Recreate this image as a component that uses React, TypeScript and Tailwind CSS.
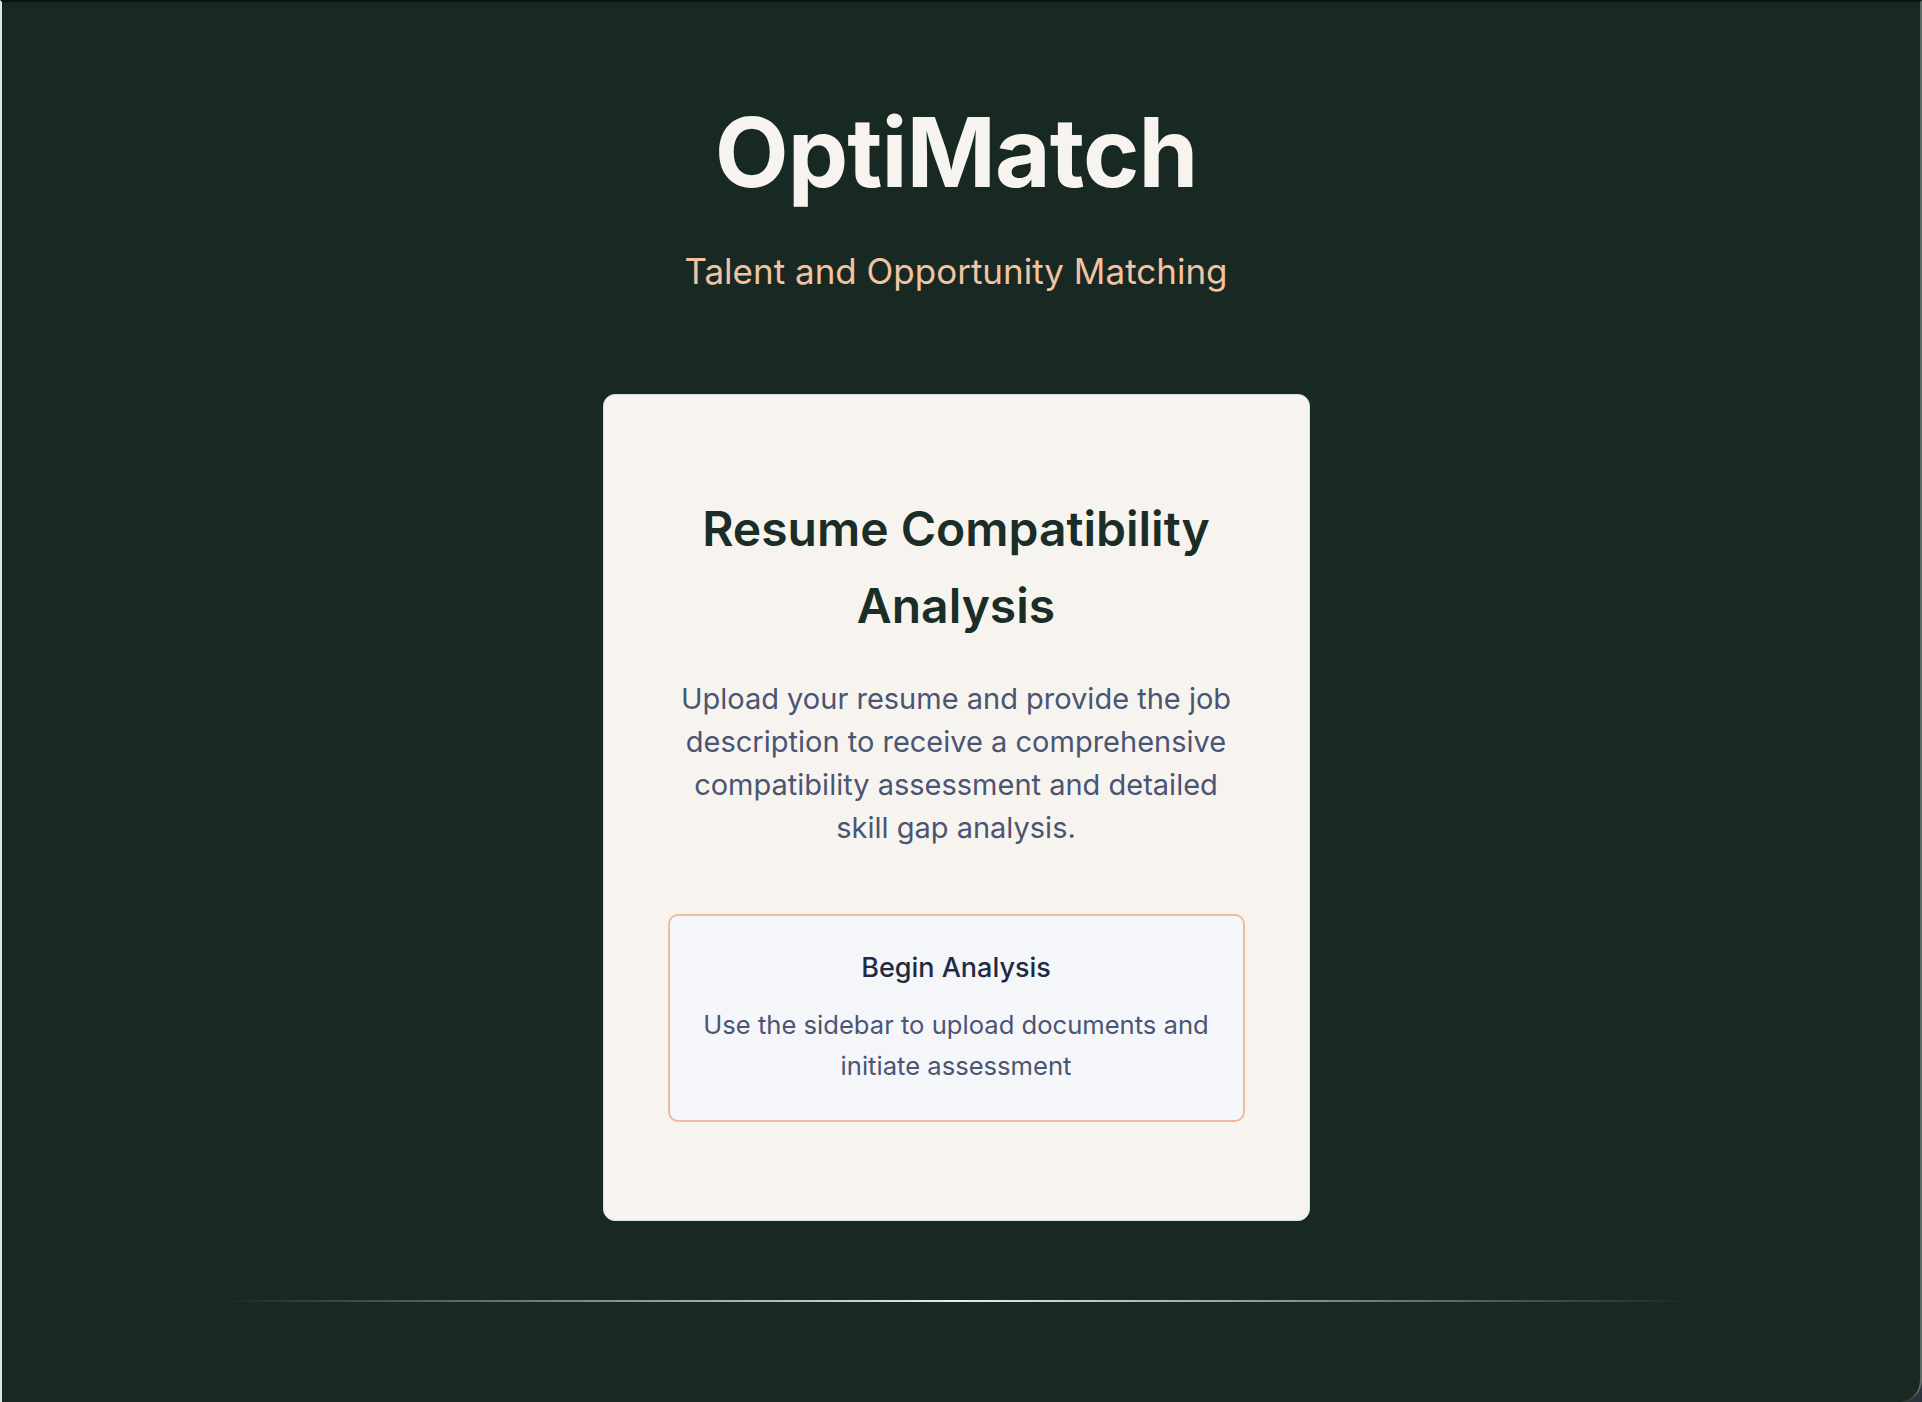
import React from 'react';

const App = () => {
  return (
    <div className="h-[1402px] w-full bg-[#2b323b] overflow-hidden" style={{ fontFamily: 'Inter, "Noto Sans", sans-serif' }}>
      <div className="h-full border-t-2 border-t-[#0e1014] border-l-2 border-l-[#dde4ea] border-r-2 border-r-[#5f6d69] rounded-br-[22px] bg-[#182923] pr-[10px] flex flex-col items-center">
        {/* Header */}
        <header className="pt-[102px] flex flex-col items-center">
          <h1 className="text-8xl leading-none font-bold tracking-[-0.01em] text-[#f7f4ef]">OptiMatch</h1>
          <p className="mt-[54px] text-[35px] leading-none text-[#f3c3a1]">Talent and Opportunity Matching</p>
        </header>

        {/* Main card */}
        <main className="mt-[105px] w-[707px] rounded-xl border border-[#d9dfe6] bg-[#f7f4ef] px-16 pt-[96px] pb-[98px] flex flex-col items-center text-center">
          <h2 className="text-[48px] leading-[1.6] font-semibold text-[#1a2e27]">Resume Compatibility Analysis</h2>
          <p className="mt-8 max-w-[560px] text-[29px] leading-[43px] text-[#4a5573]">
            Upload your resume and provide the job description to receive a comprehensive compatibility assessment and
            detailed skill gap analysis.
          </p>
          <div className="mt-[65px] w-full rounded-[10px] border-2 border-[#f0bb9c] bg-[#f5f6fa] px-8 pt-8 pb-[33px]">
            <h3 className="text-[27px] leading-[40px] font-medium text-[#1f2a44]">Begin Analysis</h3>
            <p className="mt-4 text-[25.6px] leading-[41.5px] text-[#4a5573]">
              Use the sidebar to upload documents and initiate assessment
            </p>
          </div>
        </main>

        {/* Divider */}
        <div className="mt-[79px] h-[2px] w-[1470px] bg-gradient-to-r from-transparent via-[#e6ebf2] to-transparent" />
      </div>
    </div>
  );
};

export default App;
